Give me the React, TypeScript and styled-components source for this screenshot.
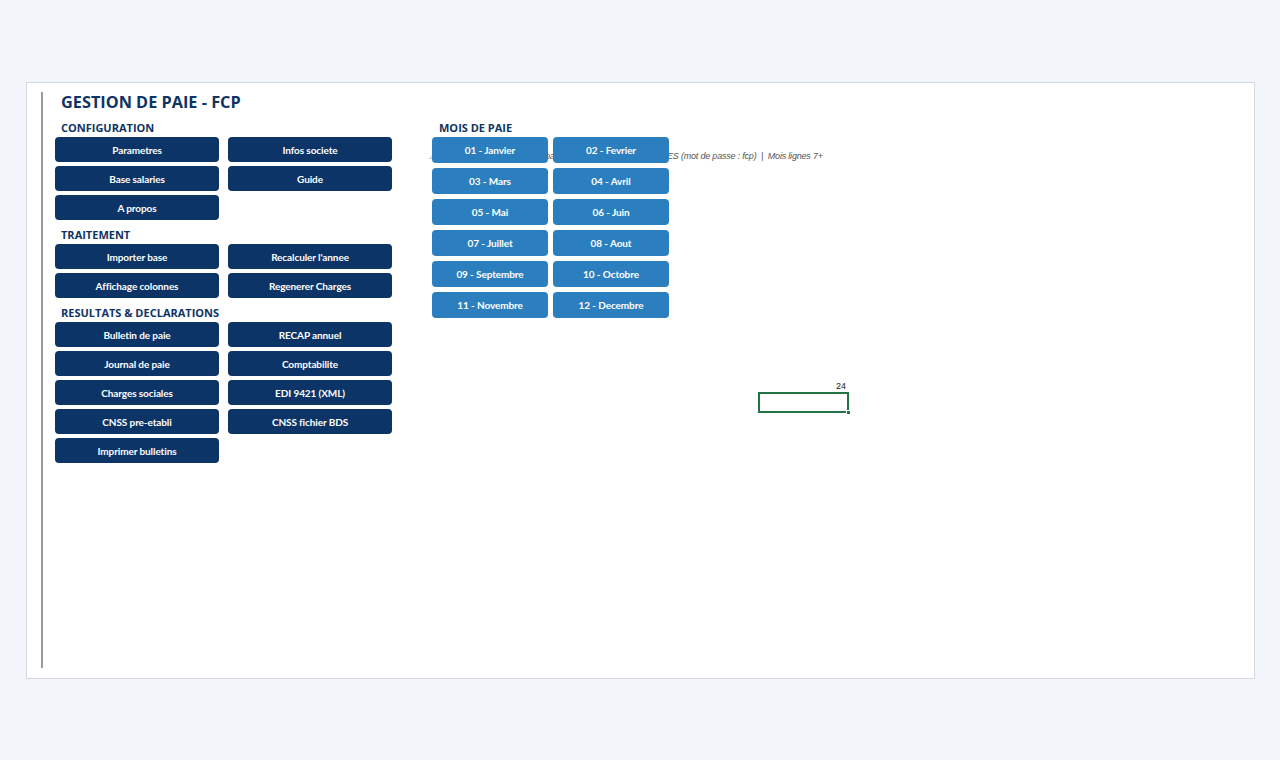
import React from "react";
import styled, { createGlobalStyle } from "styled-components";

const GlobalStyle = createGlobalStyle`
  html, body {
    margin: 0;
    padding: 0;
    background: #f2f5fa;
  }
  * {
    box-sizing: border-box;
  }
`;

const Page = styled.div`
  width: 1280px;
  height: 760px;
  padding: 82px 25px 0 26px;
  background: #f2f5fa;
`;

const Sheet = styled.div`
  position: relative;
  width: 1229px;
  height: 597px;
  background: #ffffff;
  border: 1px solid #d5d9df;
  display: flex;
  padding: 9px 0 10px 14px;
`;

const Rule = styled.div`
  width: 2px;
  background: #9a9a9a;
  flex-shrink: 0;
`;

const Content = styled.div`
  display: flex;
  flex-direction: column;
  padding-left: 12px;
`;

const Title = styled.h1`
  margin: 0;
  height: 21px;
  line-height: 21px;
  padding-left: 6px;
  font-family: "Open Sans", "Liberation Sans", sans-serif;
  font-weight: 700;
  font-size: 16.3px;
  color: #0f3464;
`;

const Columns = styled.div`
  display: flex;
  gap: 41px;
`;

const LeftColumn = styled.div`
  display: flex;
  flex-direction: column;
  width: 336px;
`;

const Section = styled.section`
  position: relative;
  display: flex;
  flex-direction: column;
`;

const SectionLabel = styled.h2<{ $indent?: number }>`
  margin: 7px 0 2px 0;
  padding-left: ${(p) => p.$indent ?? 6}px;
  line-height: 15px;
  height: 15px;
  font-family: "Open Sans", "Liberation Sans", sans-serif;
  font-weight: 700;
  font-size: 11px;
  color: #0f3464;
  white-space: nowrap;
`;

const ButtonGrid = styled.div<{ $col: number; $row: number; $gap: number }>`
  position: relative;
  z-index: 1;
  display: grid;
  grid-template-columns: repeat(2, ${(p) => p.$col}px);
  grid-auto-rows: ${(p) => p.$row}px;
  column-gap: ${(p) => p.$gap}px;
  row-gap: ${(p) => (p.$row > 25 ? 5 : 4)}px;
`;

const SheetButton = styled.button<{ $tone: "navy" | "blue" }>`
  border: none;
  margin: 0;
  padding: 0;
  border-radius: 4px;
  background: ${(p) => (p.$tone === "navy" ? "#0c3467" : "#2c7fbe")};
  color: #ffffff;
  font-family: "Lato", "Open Sans", sans-serif;
  font-weight: 700;
  font-size: 10px;
  letter-spacing: -0.1px;
  text-align: center;
  cursor: pointer;
  white-space: nowrap;
`;

const MonthColumn = styled(Section)`
  width: 240px;
`;

const Note = styled.div`
  position: absolute;
  left: -3px;
  top: 37px;
  line-height: 12px;
  font-family: "Liberation Sans", Arial, sans-serif;
  font-style: italic;
  font-size: 9px;
  letter-spacing: -0.2px;
  color: #555555;
  white-space: pre;
  z-index: 0;
`;

const SelectedCell = styled.div`
  position: absolute;
  left: 731px;
  top: 309px;
  width: 91px;
  height: 21px;
  border: 2px solid #217346;
`;

const CellHandle = styled.span`
  position: absolute;
  right: -4px;
  bottom: -4px;
  width: 5px;
  height: 5px;
  background: #217346;
  border: 1px solid #ffffff;
`;

const CellValue = styled.span`
  position: absolute;
  right: 1px;
  top: -13px;
  font-family: "Liberation Sans", Arial, sans-serif;
  font-size: 9px;
  line-height: 10px;
  color: #222222;
`;

const config = ["Parametres", "Infos societe", "Base salaries", "Guide", "A propos"];
const traitement = ["Importer base", "Recalculer l'annee", "Affichage colonnes", "Regenerer Charges"];
const resultats = [
  "Bulletin de paie",
  "RECAP annuel",
  "Journal de paie",
  "Comptabilite",
  "Charges sociales",
  "EDI 9421 (XML)",
  "CNSS pre-etabli",
  "CNSS fichier BDS",
  "Imprimer bulletins",
];
const months = [
  "01 - Janvier",
  "02 - Fevrier",
  "03 - Mars",
  "04 - Avril",
  "05 - Mai",
  "06 - Juin",
  "07 - Juillet",
  "08 - Aout",
  "09 - Septembre",
  "10 - Octobre",
  "11 - Novembre",
  "12 - Decembre",
];

const NavySection: React.FC<{ label: string; items: string[] }> = ({ label, items }) => (
  <Section>
    <SectionLabel>{label}</SectionLabel>
    <ButtonGrid $col={164} $row={25} $gap={9}>
      {items.map((item) => (
        <SheetButton key={item} $tone="navy">
          {item}
        </SheetButton>
      ))}
    </ButtonGrid>
  </Section>
);

const App: React.FC = () => {
  return (
    <>
      <GlobalStyle />
      <Page>
        <Sheet>
          <Rule />
          <Content>
            <Title>GESTION DE PAIE - FCP</Title>
            <Columns>
              <LeftColumn>
                <NavySection label="CONFIGURATION" items={config} />
                <NavySection label="TRAITEMENT" items={traitement} />
                <NavySection label="RESULTATS & DECLARATIONS" items={resultats} />
              </LeftColumn>
              <MonthColumn>
                <SectionLabel $indent={7}>MOIS DE PAIE</SectionLabel>
                <Note>{"⚠ Cliquez sur un mois pour la paie. Onglets de mois PROTEGES (mot de passe : fcp)  |  Mois lignes 7+"}</Note>
                <ButtonGrid $col={116} $row={26} $gap={5}>
                  {months.map((m) => (
                    <SheetButton key={m} $tone="blue">
                      {m}
                    </SheetButton>
                  ))}
                </ButtonGrid>
              </MonthColumn>
            </Columns>
          </Content>
          <SelectedCell>
            <CellValue>24</CellValue>
            <CellHandle />
          </SelectedCell>
        </Sheet>
      </Page>
    </>
  );
};

export default App;
